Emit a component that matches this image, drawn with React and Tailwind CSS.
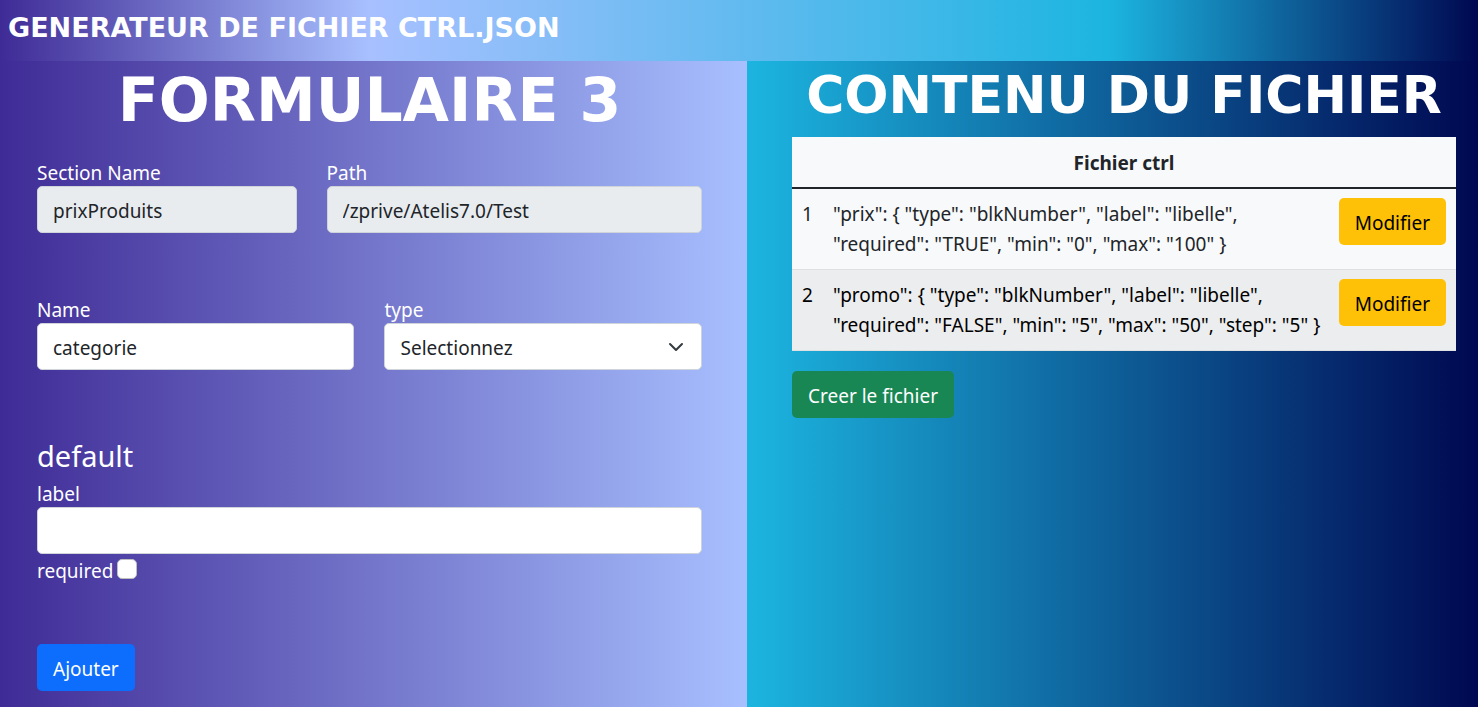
import { useState } from "react";

const field =
  "block h-[47px] w-full rounded-[5px] border border-[#ced4da] px-[15px] pt-0.5 text-[19px] leading-[30px] text-[#212529]";
const button = "h-[47px] rounded-[5px] px-4 pt-0.5 text-[19px] leading-[30px]";
const display = "font-['DejaVu_Sans',sans-serif] font-bold uppercase text-white";

const rows = [
  {
    id: 1,
    text: '"prix": { "type": "blkNumber", "label": "libelle", "required": "TRUE", "min": "0", "max": "100" }',
    style: "bg-[#f8f9fa] text-[#212529]",
  },
  {
    id: 2,
    text: '"promo": { "type": "blkNumber", "label": "libelle", "required": "FALSE", "min": "5", "max": "50", "step": "5" }',
    style: "bg-[#ecedee] text-black",
  },
];

function Field({ id, label, className, children }) {
  return (
    <div className={className}>
      <label htmlFor={id} className="block pt-1 leading-[26px]">
        {label}
      </label>
      {children}
    </div>
  );
}

function Formulaire() {
  const [name, setName] = useState("categorie");
  const [libelle, setLibelle] = useState("");
  const [required, setRequired] = useState(false);

  return (
    <section className="w-[50.54%] bg-linear-to-r/srgb from-[#3f2b96] to-[#a8c0ff] pt-2 pr-[45px] pb-4 pl-[37px] text-white">
      <h1 className={`${display} text-center text-[60px] leading-[62px] whitespace-nowrap`}>Formulaire 3</h1>
      <form onSubmit={(e) => e.preventDefault()}>
        <div className="mt-[25px] grid grid-cols-12 gap-x-[30px]">
          <Field id="section" label="Section Name" className="col-span-5">
            <input id="section" type="text" readOnly value="prixProduits" className={`${field} bg-[#e9ecef]`} />
          </Field>
          <Field id="path" label="Path" className="col-span-7">
            <input id="path" type="text" readOnly value="/zprive/Atelis7.0/Test" className={`${field} bg-[#e9ecef]`} />
          </Field>
        </div>
        <div className="mt-[60px] grid grid-cols-2 gap-x-[30px]">
          <Field id="name" label="Name">
            <input
              id="name"
              type="text"
              value={name}
              onChange={(e) => setName(e.target.value)}
              className={`${field} bg-white`}
            />
          </Field>
          <Field id="type" label="type">
            <div className="relative">
              <select id="type" className={`${field} appearance-none bg-white`}>
                <option>Selectionnez</option>
              </select>
              <svg
                viewBox="0 0 16 16"
                aria-hidden="true"
                className="pointer-events-none absolute top-4 right-[18px] size-4"
              >
                <path
                  d="M2 5l6 6 6-6"
                  fill="none"
                  stroke="#343a40"
                  strokeWidth="2"
                  strokeLinecap="round"
                  strokeLinejoin="round"
                />
              </svg>
            </div>
          </Field>
        </div>
        <h3 className="mt-[68px] mb-[3px] text-[29px] leading-9">default</h3>
        <Field id="label" label="label">
          <input
            id="label"
            type="text"
            value={libelle}
            onChange={(e) => setLibelle(e.target.value)}
            className={`${field} bg-white`}
          />
        </Field>
        <div className="flex gap-1">
          <label htmlFor="required" className="pt-1 leading-[26px]">
            required
          </label>
          <input
            id="required"
            type="checkbox"
            checked={required}
            onChange={(e) => setRequired(e.target.checked)}
            className="mt-[5px] size-5 appearance-none rounded-[5px] border border-[#bfbfbf] bg-white checked:bg-[#0d6efd]"
          />
        </div>
        <button type="submit" className={`${button} mt-[60px] block bg-[#0d6efd] text-white`}>
          Ajouter
        </button>
      </form>
    </section>
  );
}

function Contenu() {
  return (
    <section className="flex-1 bg-linear-to-r/srgb from-[#1cb5e0] to-[#000851] pt-1 pr-[22px] pb-4 pl-[45px]">
      <h1 className={`${display} text-center text-[52px] leading-[60px] whitespace-nowrap`}>Contenu du fichier</h1>
      <table className="mt-3 w-full border-collapse bg-[#f8f9fa]">
        <thead>
          <tr className="border-b-2 border-[#212529] text-[#212529]">
            <th colSpan={3} className="px-[10px] pt-[11px] pb-[9px] text-center font-bold">
              Fichier ctrl
            </th>
          </tr>
        </thead>
        <tbody>
          {rows.map((row) => (
            <tr key={row.id} className={`border-b border-[#dfe0e1] align-top ${row.style}`}>
              <td className="w-[31px] p-[10px]">{row.id}</td>
              <td className="py-[10px] pl-[10px]">{row.text}</td>
              <td className="w-[127px] px-[10px] pt-[9px]">
                <button type="button" className={`${button} bg-[#ffc107] text-black`}>
                  Modifier
                </button>
              </td>
            </tr>
          ))}
        </tbody>
      </table>
      <button type="button" className={`${button} mt-5 bg-[#198754] text-white`}>
        Creer le fichier
      </button>
    </section>
  );
}

export default function App() {
  return (
    <div className="flex min-h-screen flex-col font-['Noto_Sans',sans-serif] text-[19px] leading-[30px]">
      <header className="bg-[linear-gradient(to_right,#3f2b96,#a8c0ff_25%,#1cb5e0_75%,#000851)] px-2 pt-[13px] pb-[18px]">
        <p className={`${display} text-[27px] leading-[30px] whitespace-nowrap`}>Generateur de fichier ctrl.json</p>
      </header>
      <main className="flex flex-1">
        <Formulaire />
        <Contenu />
      </main>
    </div>
  );
}
